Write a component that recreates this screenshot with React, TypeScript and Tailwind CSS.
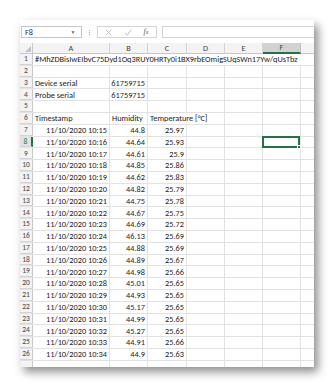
import React from "react";

type Cell = { text?: string; align?: "left" | "right"; span?: number };

const colWidths = [77, 38, 39, 38, 38, 38, 38];
// G sits past the window edge, so its label is never seen
const colNames = ["A", "B", "C", "D", "E", "F", ""];

const widthClass: Record<number, string> = {
  38: "w-[38px]",
  39: "w-[39px]",
  77: "w-[77px]",
};

const readings: [string, string, string][] = [
  ["10:15", "44.8", "25.97"],
  ["10:16", "44.64", "25.93"],
  ["10:17", "44.61", "25.9"],
  ["10:18", "44.85", "25.86"],
  ["10:19", "44.62", "25.83"],
  ["10:20", "44.82", "25.79"],
  ["10:21", "44.75", "25.78"],
  ["10:22", "44.67", "25.75"],
  ["10:23", "44.69", "25.72"],
  ["10:24", "46.13", "25.69"],
  ["10:25", "44.88", "25.69"],
  ["10:26", "44.89", "25.67"],
  ["10:27", "44.98", "25.66"],
  ["10:28", "45.01", "25.65"],
  ["10:29", "44.93", "25.65"],
  ["10:30", "45.17", "25.65"],
  ["10:31", "44.99", "25.65"],
  ["10:32", "45.27", "25.65"],
  ["10:33", "44.91", "25.66"],
  ["10:34", "44.9", "25.63"],
];

function buildRows(): Cell[][] {
  const rows: Cell[][] = [];
  rows.push([
    {
      text: "#MhZDBisIwEIbvC75Dyd1Oq3RUY0HRTy0i1BX9rbEOmigSUqSWn17Yw/qUsTbz",
      span: 7,
    },
  ]);
  rows.push([]);
  rows.push([{ text: "Device serial" }, { text: "61759715", align: "right" }]);
  rows.push([{ text: "Probe serial" }, { text: "61759715", align: "right" }]);
  rows.push([]);
  rows.push([{ text: "Timestamp" }, { text: "Humidity" }, { text: "Temperature [°C]", span: 2 }]);
  readings.forEach(([t, h, c]) => {
    rows.push([
      { text: `11/10/2020 ${t}`, align: "right" },
      { text: h, align: "right" },
      { text: c, align: "right" },
    ]);
  });
  rows.push([]);
  return rows;
}

function SheetRow({ index, cells, last }: { index: number; cells: Cell[]; last?: boolean }) {
  const active = index === 8;
  const out: React.ReactNode[] = [];
  let col = 0;
  cells.forEach((c, i) => {
    const span = c.span ?? 1;
    const w = colWidths.slice(col, col + span).reduce((a, b) => a + b, 0);
    out.push(
      <div
        key={i}
        style={{ width: w }}
        className={`shrink-0 h-full border-r border-[#e2e2e2] flex items-center px-[2px] whitespace-nowrap overflow-hidden ${
          c.align === "right" ? "justify-end" : "justify-start"
        }`}
      >
        {c.text}
      </div>
    );
    col += span;
  });
  for (; col < colWidths.length; col++) {
    const isSel = active && col === 5;
    out.push(
      <div
        key={`e${col}`}
        className={`shrink-0 h-full border-r border-[#e2e2e2] ${widthClass[colWidths[col]]} ${isSel ? "relative" : ""}`}
      >
        {isSel && (
          <div className="absolute -left-[1px] -top-[1px] right-0 -bottom-[1px] border-2 border-[#217346]">
            <div className="absolute -right-[3px] -bottom-[3px] w-[4px] h-[4px] bg-[#217346] border border-white" />
          </div>
        )}
      </div>
    );
  }
  return (
    <div className="flex h-[11.8px] shrink-0 border-b border-[#e2e2e2] text-[#222]">
      <div
        className={`w-[13px] shrink-0 h-full flex items-center justify-center text-[7.5px] border-b border-[#d4d4d4] ${
          active
            ? "bg-[#e1e1e1] text-[#217346] border-r-2 border-r-[#217346]"
            : "bg-[#f3f3f3] text-[#444] border-r border-r-[#c8c8c8]"
        }`}
      >
        {last ? "" : index}
      </div>
      {out}
    </div>
  );
}

export default function App() {
  const rows = buildRows();
  return (
    <div
      className="w-[334px] h-[388px] bg-white pt-[20px] pl-[20px]"
      style={{ fontFamily: "Carlito, 'Liberation Sans', Arial, sans-serif" }}
    >
      <div className="w-[294px] h-[347px] bg-white overflow-hidden flex flex-col shadow-[4px_5px_9px_rgba(0,0,0,0.45)] text-[8.3px] leading-none">
        {/* Formula bar */}
        <div className="h-[23px] shrink-0 flex items-start pt-[6px] pl-[1px]">
          <div className="w-[64px] h-[12px] border border-[#c6c6c6] flex items-center justify-between pl-[3px] pr-[6px] text-[#333]">
            <span>F8</span>
            <span className="text-[5px] text-[#666]">▼</span>
          </div>
          <div className="w-[15px] h-[12px] flex flex-col items-center justify-center gap-[1px]">
            <span className="w-[1px] h-[1px] bg-[#b0b0b0]" />
            <span className="w-[1px] h-[1px] bg-[#b0b0b0]" />
            <span className="w-[1px] h-[1px] bg-[#b0b0b0]" />
          </div>
          <div className="w-[63px] h-[12px] border border-[#d4d4d4] flex items-center pl-[7px] gap-[12px]">
            <svg width="7" height="7" viewBox="0 0 10 10">
              <path d="M1 1L9 9M9 1L1 9" stroke="#b8b8b8" strokeWidth="1.2" fill="none" />
            </svg>
            <svg width="8" height="7" viewBox="0 0 10 9">
              <path d="M1 5L4 8L9 1" stroke="#b8b8b8" strokeWidth="1.2" fill="none" />
            </svg>
            <span
              className="italic text-[#555] text-[7.5px]"
              style={{ fontFamily: "'Liberation Serif', serif" }}
            >
              f<span className="text-[6px]">x</span>
            </span>
          </div>
          <div className="ml-[5px] w-[160px] h-[12px] border border-[#d4d4d4] border-r-0" />
        </div>

        {/* Column headers */}
        <div className="flex h-[11px] shrink-0 text-[#444]">
          <div className="w-[13px] shrink-0 h-full bg-[#f3f3f3] border-r border-b border-[#c8c8c8] relative">
            <svg className="absolute right-[1px] bottom-[1px]" width="6" height="6" viewBox="0 0 6 6">
              <path d="M6 0L6 6L0 6Z" fill="#c3c3c3" />
            </svg>
          </div>
          {colNames.map((n, i) => (
            <div
              key={i}
              className={`${widthClass[colWidths[i]]} shrink-0 h-full flex items-center justify-center border-r ${
                n === "F"
                  ? "bg-[#d2d2d2] border-r-[#c0c0c0] border-b-2 border-b-[#217346] text-[#1e5a36]"
                  : "bg-[#f3f3f3] border-r-[#d4d4d4] border-b border-b-[#c8c8c8]"
              }`}
            >
              {n}
            </div>
          ))}
        </div>

        {rows.map((cells, i) => (
          <SheetRow key={i} index={i + 1} cells={cells} last={i === rows.length - 1} />
        ))}
      </div>
    </div>
  );
}
